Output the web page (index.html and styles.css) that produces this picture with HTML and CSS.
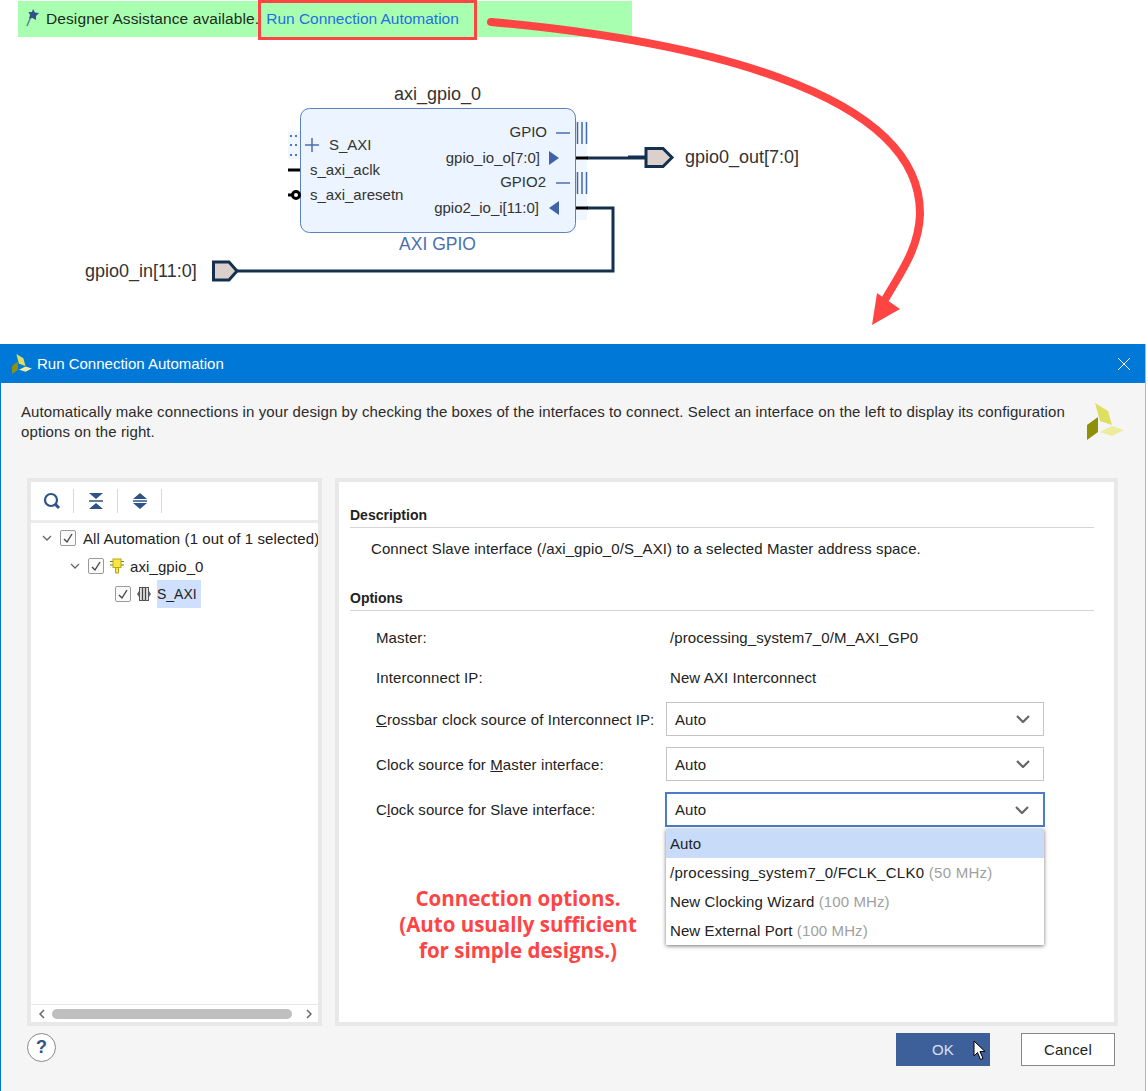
FILE: index.html
```html
<!DOCTYPE html>
<html>

<head>
    <title>Run Connection Automation</title>
    <meta charset="utf-8">
    <link rel="stylesheet" href="styles.css">
</head>

<body>
    <svg width="0" height="0" class="defs">
        <symbol id="logo" viewBox="0 0 37 37">
            <polygon class="logo-mid" points="8,0 21,8 25,22 13,18" />
            <polygon class="logo-dark" points="11,14 11,29 0,37 0,22" />
            <polygon class="logo-light" points="13,29 25,23 37,27 25,33" />
        </symbol>
    </svg>

    <div class="top">
        <div class="banner">
            <svg class="pin" width="16" height="20" viewBox="0 0 16 20">
                <path d="M7 5L2 17" stroke="#5f7f9f" stroke-width="1.500" fill="none" />
                <path d="M8 0L10 3.500L14 4L11 7L11 11L7.500 9L4 9.500L5 6L3.500 3L7 3Z" fill="#2f5287" />
            </svg>
            <span class="banner-text">Designer Assistance available.</span>
            <a class="banner-link">Run Connection Automation</a>
        </div>

        <svg class="diagram" width="1148" height="344" viewBox="0 0 1148 344">
            <!-- nets -->
            <path class="net" d="M576 158H628" />
            <path class="net-thick" d="M628 157.500H646" />
            <path class="net" d="M576 208H613V271H236" />

            <!-- block -->
            <rect class="pin-bg" x="288" y="131" width="12" height="28" />
            <rect class="pin-bg" x="576" y="120" width="11" height="100" />
            <path class="stub" d="M576 158H588M576 208H588M288 170H300M288 195H293" />
            <rect class="block" x="300.500" y="108.500" width="275" height="124" rx="9" />
            <text class="label-lg" x="437.500" y="100" text-anchor="middle">axi_gpio_0</text>
            <text class="label-blue" x="437.500" y="250" text-anchor="middle">AXI GPIO</text>

            <path class="dots" d="M290 135h2v2h-2zM295 135h2v2h-2zM290 144h2v2h-2zM295 144h2v2h-2zM290 154h2v2h-2zM295 154h2v2h-2z" />
            <path class="port-line" d="M305 145H319M312 138V152" />
            <text class="label" x="329" y="150">S_AXI</text>
            <text class="label" x="310" y="175">s_axi_aclk</text>
            <text class="label" x="310" y="200">s_axi_aresetn</text>
            <circle class="inv" cx="296" cy="195" r="3.500" />

            <text class="label" x="547" y="137" text-anchor="end">GPIO</text>
            <text class="label" x="540" y="163" text-anchor="end">gpio_io_o[7:0]</text>
            <text class="label" x="546" y="187" text-anchor="end">GPIO2</text>
            <text class="label" x="539" y="213" text-anchor="end">gpio2_io_i[11:0]</text>
            <path class="port-line" d="M556 133H570M556 183H570" />
            <polygon class="tri" points="549,151 559,158 549,165" />
            <polygon class="tri" points="559,201 549,208 559,215" />
            <path class="bars" d="M577.500 122V144M582 122V144M586.500 122V144M577.500 172V194M582 172V194M586.500 172V194" />

            <!-- external ports -->
            <polygon class="ext" points="646,148.500 663,148.500 672,157.500 663,166.500 646,166.500" />
            <text class="label-lg" x="685" y="163">gpio0_out[7:0]</text>
            <polygon class="ext" points="213.500,262 229,262 237,271 229,280 213.500,280" />
            <text class="label-lg" x="85" y="277">gpio0_in[11:0]</text>

            <!-- annotation -->
            <rect class="callout" x="259.500" y="1.500" width="216" height="37" />
            <path class="arrow" d="M491 22C690 40 921 90 920 214C919 248 901 272 886 298" />
            <polygon class="arrow-head" points="877,293 900,309 872,325" />
        </svg>
    </div>

    <div class="dialog">
        <div class="titlebar">
            <svg class="title-logo" width="20" height="20"><use href="#logo" /></svg>
            <span class="title-text">Run Connection Automation</span>
            <svg class="close" width="12" height="12" viewBox="0 0 12 12">
                <path d="M0 0L12 12M12 0L0 12" stroke="#fff" stroke-width="1" />
            </svg>
        </div>

        <div class="intro">
            <p>Automatically make connections in your design by checking the boxes of the interfaces to connect. Select an interface on the left to display its configuration options on the right.</p>
            <svg class="intro-logo" width="37" height="37"><use href="#logo" /></svg>
        </div>

        <div class="panels">
            <div class="panel tree-panel">
                <div class="toolbar">
                    <svg class="tool" width="20" height="20" viewBox="0 0 20 20">
                        <circle cx="9" cy="9" r="6" fill="none" stroke="#2f5287" stroke-width="2.200" />
                        <path d="M13 13L17 17" stroke="#2f5287" stroke-width="3" />
                    </svg>
                    <span class="tool-sep"></span>
                    <svg class="tool" width="20" height="20" viewBox="0 0 20 20">
                        <path d="M3 2H17L10 8ZM3 18H17L10 12Z" fill="#2f5287" />
                        <path d="M3 10H17" stroke="#2f5287" stroke-width="1.500" />
                    </svg>
                    <span class="tool-sep"></span>
                    <svg class="tool" width="20" height="20" viewBox="0 0 20 20">
                        <path d="M10 2L17 8H3ZM10 18L3 12H17Z" fill="#2f5287" />
                        <path d="M3 10H17" stroke="#2f5287" stroke-width="1.500" />
                    </svg>
                    <span class="tool-sep"></span>
                </div>

                <div class="tree">
                    <div class="tree-row level-0">
                        <svg class="twist" width="10" height="6" viewBox="0 0 10 6"><path d="M1 1L5 5L9 1" /></svg>
                        <span class="check"><svg width="12" height="12" viewBox="0 0 12 12"><path d="M2 7L5 10L10 2" /></svg></span>
                        <span class="tree-label">All Automation (1 out of 1 selected)</span>
                    </div>
                    <div class="tree-row level-1">
                        <svg class="twist" width="10" height="6" viewBox="0 0 10 6"><path d="M1 1L5 5L9 1" /></svg>
                        <span class="check"><svg width="12" height="12" viewBox="0 0 12 12"><path d="M2 7L5 10L10 2" /></svg></span>
                        <svg class="node-icon" width="16" height="16" viewBox="0 0 16 16">
                            <path d="M1 3.500H15M1 7H15" stroke="#77771a" stroke-width="1.200" />
                            <rect x="4" y="1" width="8" height="8.500" fill="#f5e642" stroke="#b9a814" />
                            <path d="M6.500 9.500H9.500V15H6.500Z" fill="#f5e642" stroke="#b9a814" />
                        </svg>
                        <span class="tree-label">axi_gpio_0</span>
                    </div>
                    <div class="tree-row level-2">
                        <span class="check"><svg width="12" height="12" viewBox="0 0 12 12"><path d="M2 7L5 10L10 2" /></svg></span>
                        <svg class="node-icon" width="16" height="16" viewBox="0 0 16 16">
                            <path d="M1 8L3 5V11ZM15 8L13 5V11Z" fill="#666" />
                            <rect x="3.500" y="1.500" width="9" height="13" fill="#e4e4e4" stroke="#555" />
                            <path d="M6.500 2V14M9.500 2V14" stroke="#444" stroke-width="1.300" />
                        </svg>
                        <span class="tree-label selected">S_AXI</span>
                    </div>
                </div>

                <div class="hscroll">
                    <svg class="scroll-arrow" width="6" height="10" viewBox="0 0 6 10"><path d="M5 1L1 5L5 9" /></svg>
                    <span class="scroll-thumb"></span>
                    <svg class="scroll-arrow" width="6" height="10" viewBox="0 0 6 10"><path d="M1 1L5 5L1 9" /></svg>
                </div>
            </div>

            <div class="panel details">
                <div class="section-head">Description</div>
                <p class="description">Connect Slave interface (/axi_gpio_0/S_AXI) to a selected Master address space.</p>
                <div class="section-head options-head">Options</div>

                <div class="form">
                    <div class="row row-text">
                        <span class="field-label">Master:</span>
                        <span class="field-value">/processing_system7_0/M_AXI_GP0</span>
                    </div>
                    <div class="row row-text row-last">
                        <span class="field-label">Interconnect IP:</span>
                        <span class="field-value">New AXI Interconnect</span>
                    </div>
                    <div class="row">
                        <span class="field-label"><u>C</u>rossbar clock source of Interconnect IP:</span>
                        <div class="combo">
                            <span>Auto</span>
                            <svg class="combo-arrow" width="14" height="8" viewBox="0 0 14 8"><path d="M1 1L7 7L13 1" /></svg>
                        </div>
                    </div>
                    <div class="row">
                        <span class="field-label">Clock source for <u>M</u>aster interface:</span>
                        <div class="combo">
                            <span>Auto</span>
                            <svg class="combo-arrow" width="14" height="8" viewBox="0 0 14 8"><path d="M1 1L7 7L13 1" /></svg>
                        </div>
                    </div>
                    <div class="row">
                        <span class="field-label">C<u>l</u>ock source for Slave interface:</span>
                        <div class="combo combo-open">
                            <span>Auto</span>
                            <svg class="combo-arrow" width="14" height="8" viewBox="0 0 14 8"><path d="M1 1L7 7L13 1" /></svg>
                            <div class="menu">
                                <div class="menu-item active">Auto</div>
                                <div class="menu-item menu-item-wide">/processing_system7_0/FCLK_CLK0 <span class="muted">(50 MHz)</span></div>
                                <div class="menu-item">New Clocking Wizard <span class="muted">(100 MHz)</span></div>
                                <div class="menu-item">New External Port <span class="muted">(100 MHz)</span></div>
                            </div>
                        </div>
                    </div>
                </div>

                <p class="note">Connection options.<br>(Auto usually sufficient<br>for simple designs.)</p>
            </div>
        </div>

        <div class="footer">
            <span class="help">?</span>
            <div class="buttons">
                <button class="btn btn-ok">OK
                    <svg class="cursor" width="14" height="21" viewBox="0 0 14 21">
                        <path d="M1 1V16L4.500 12.500L7.500 19.500L10 18.500L7 11.500H12Z" fill="#fff" stroke="#000" />
                    </svg>
                </button>
                <button class="btn btn-cancel">Cancel</button>
            </div>
        </div>
    </div>
</body>

</html>
```

FILE: styles.css
```css
html {
    background-color: #ffffff;
}

body {
    margin: 0;
    width: 1148px;
    height: 1091px;
    overflow: hidden;
    font-family: "Liberation Sans", Arial, sans-serif;
    font-size: 15px;
    letter-spacing: 0.1px;
    color: #222222;
}

p {
    margin: 0;
}

.defs {
    position: absolute;
}

.logo-mid {
    fill: #dede5f;
}

.logo-dark {
    fill: #8f8f0a;
}

.logo-light {
    fill: #ecec9c;
}

/* top part: schematic */
.top {
    position: relative;
    height: 344px;
}

.diagram {
    position: absolute;
    left: 0;
    top: 0;
}

.diagram text {
    font-family: "Liberation Sans", Arial, sans-serif;
    letter-spacing: 0;
    fill: #333333;
}

.banner {
    display: flex;
    align-items: center;
    width: 614px;
    height: 36px;
    margin-left: 18px;
    padding-left: 7px;
    box-sizing: border-box;
    position: relative;
    top: 1px;
    background-color: #a9ffb0;
}

.banner-text {
    margin-left: 5px;
    font-size: 15.5px;
    letter-spacing: 0.1px;
    color: #1c2c1c;
}

.banner-link {
    margin-left: 7px;
    font-size: 15.5px;
    letter-spacing: -0.02px;
    color: #1f6fe0;
}

.net {
    fill: none;
    stroke: #14304f;
    stroke-width: 3;
}

.net-thick {
    fill: none;
    stroke: #14304f;
    stroke-width: 4;
}

.stub {
    fill: none;
    stroke: #000000;
    stroke-width: 3;
}

.pin-bg {
    fill: #f0f6ff;
}

.block {
    fill: #ecf4ff;
    stroke: #5b80bb;
}

.label {
    font-size: 15px;
}

.label-lg {
    font-size: 18px;
}

.diagram .label-blue {
    font-size: 17.500px;
    fill: #4a6fb0;
}

.dots {
    fill: #4a78b8;
}

.port-line {
    fill: none;
    stroke: #4a6fb0;
    stroke-width: 1.500;
}

.tri {
    fill: #3f62a8;
}

.bars {
    fill: none;
    stroke: #3f6aa8;
    stroke-width: 1.500;
}

.inv {
    fill: #ffffff;
    stroke: #000000;
    stroke-width: 3;
}

.ext {
    fill: #dbd0cb;
    stroke: #14304f;
    stroke-width: 3;
}

.callout {
    fill: none;
    stroke: #ff4444;
    stroke-width: 3;
}

.arrow {
    fill: none;
    stroke: #ff4444;
    stroke-width: 8;
    stroke-linecap: round;
}

.arrow-head {
    fill: #ff4444;
}

/* dialog */
.dialog {
    display: flex;
    flex-direction: column;
    width: 1146px;
    height: 747px;
    box-sizing: border-box;
    border-left: 1px solid #0078d7;
    border-right: 1px solid #8fc0ea;
    background-color: #f5f5f5;
}

.titlebar {
    display: flex;
    align-items: center;
    height: 39px;
    flex: none;
    background-color: #0078d7;
    color: #ffffff;
}

.title-logo {
    margin-left: 11px;
}

.title-text {
    margin-left: 5px;
    letter-spacing: 0;
}

.close {
    margin-left: auto;
    margin-right: 15px;
}

.intro {
    display: flex;
    height: 95px;
    flex: none;
    box-sizing: border-box;
    padding: 19px 21px 0 20px;
    line-height: 20px;
    color: #2b2b2b;
}

.intro p {
    width: 1050px;
}

.intro-logo {
    margin-left: 16px;
    margin-top: 1px;
    flex: none;
}

.panels {
    display: flex;
    gap: 13px;
    height: 548px;
    margin-left: 26px;
    flex: none;
}

.panel {
    box-sizing: border-box;
    border: 4px solid #e8e8e8;
    background-color: #ffffff;
}

.tree-panel {
    display: flex;
    flex-direction: column;
    width: 295px;
}

.toolbar {
    display: flex;
    align-items: center;
    height: 38px;
    flex: none;
    padding-left: 11px;
    border-bottom: 3px solid #ececec;
}

.tool {
    flex: none;
}

.tool-sep {
    width: 1px;
    height: 24px;
    margin: 0 12px 0 11px;
    background-color: #d8d8d8;
}

.tree {
    flex: 1;
    padding-top: 1px;
    overflow: hidden;
}

.tree-row {
    display: flex;
    align-items: center;
    height: 28px;
    white-space: nowrap;
}

.level-0 {
    padding-left: 11px;
}

.level-1 {
    padding-left: 39px;
}

.level-2 {
    padding-left: 84px;
}

.twist {
    flex: none;
    margin-right: 8px;
    fill: none;
    stroke: #666666;
    stroke-width: 1.300;
}

.check {
    display: flex;
    align-items: center;
    justify-content: center;
    width: 16px;
    height: 16px;
    flex: none;
    box-sizing: border-box;
    border: 1px solid #9a9a9a;
    border-radius: 2px;
    background-color: #fafafa;
}

.check svg {
    fill: none;
    stroke: #444444;
    stroke-width: 1.400;
}

.node-icon {
    margin-left: 5px;
    flex: none;
}

.tree-label {
    margin-left: 7px;
}

.node-icon + .tree-label {
    margin-left: 5px;
}

.tree-label.selected {
    margin-left: 5px;
    height: 28px;
    width: 44px;
    line-height: 28px;
    font-size: 14px;
    letter-spacing: 0;
    background-color: #cfe0ff;
}

.hscroll {
    display: flex;
    align-items: center;
    height: 17px;
    flex: none;
    padding: 0 6px;
    border-top: 1px solid #e6e6e6;
    justify-content: space-between;
}

.scroll-arrow {
    fill: none;
    stroke: #666666;
    stroke-width: 1.500;
    margin: 0 0 0 2px;
}

.scroll-thumb {
    width: 240px;
    height: 10px;
    margin-left: -5px;
    border-radius: 5px;
    background-color: #bfbfbf;
}

.details {
    position: relative;
    width: 783px;
    padding: 24px 20px 0 11px;
}

.section-head {
    padding-bottom: 3px;
    line-height: 18px;
    font-size: 14px;
    letter-spacing: 0;
    font-weight: bold;
    border-bottom: 1px solid #d4d4d4;
}

.description {
    margin-top: 12px;
    padding-left: 21px;
    line-height: 18px;
}

.options-head {
    margin-top: 31px;
}

.form {
    margin-top: 17px;
    padding-left: 26px;
}

.row {
    display: flex;
    align-items: center;
    margin-bottom: 11px;
}

.row-text {
    height: 18px;
    margin-bottom: 22px;
}

.row-last {
    margin-bottom: 16px;
}

.field-label {
    width: 290px;
    flex: none;
}

.field-value {
    padding-left: 4px;
}

.combo {
    display: flex;
    align-items: center;
    justify-content: space-between;
    position: relative;
    width: 378px;
    height: 34px;
    box-sizing: border-box;
    padding: 0 13px 0 8px;
    border: 1px solid #c4c4c4;
    background-color: #ffffff;
}

.combo-open {
    height: 35px;
    margin-left: -1px;
    width: 380px;
    padding-left: 8px;
    padding-right: 14px;
    border: 2px solid #4a7cc7;
}

.combo-arrow {
    fill: none;
    stroke: #666666;
    stroke-width: 2.200;
}

.menu {
    position: absolute;
    left: -1px;
    top: 35px;
    width: 378px;
    background-color: #ffffff;
    box-shadow: 0 1px 4px rgba(0, 0, 0, 0.55);
}

.menu-item {
    height: 29px;
    padding-left: 4px;
    line-height: 29px;
}

.menu-item-wide {
    letter-spacing: 0.27px;
}

.menu-item.active {
    background-color: #c8dcfa;
}

.muted {
    color: #a0a0a0;
}

.note {
    width: 358px;
    margin-top: 58px;
    margin-left: -11px;
    font-family: "Open Sans", sans-serif;
    font-size: 20.500px;
    font-weight: bold;
    letter-spacing: 0;
    line-height: 26px;
    text-align: center;
    color: #ff4444;
}

.footer {
    display: flex;
    align-items: flex-start;
    padding: 7px 30px 0 26px;
}

.help {
    width: 29px;
    height: 29px;
    box-sizing: border-box;
    border: 1px solid #888888;
    border-radius: 50%;
    background-color: #ffffff;
    line-height: 27px;
    text-align: center;
    font-size: 18px;
    font-weight: bold;
    color: #2f5287;
}

.buttons {
    display: flex;
    gap: 31px;
    margin-left: auto;
}

.btn {
    width: 94px;
    height: 33px;
    padding: 0;
    font-family: "Liberation Sans", Arial, sans-serif;
    font-size: 15px;
    letter-spacing: 0.2px;
}

.btn-ok {
    position: relative;
    border: none;
    background-color: #3d5f9a;
    color: #d8e2f2;
}

.btn-cancel {
    border: 1px solid #888888;
    background-color: #ffffff;
    color: #222222;
}

.cursor {
    position: absolute;
    left: 77px;
    top: 7px;
}
```
